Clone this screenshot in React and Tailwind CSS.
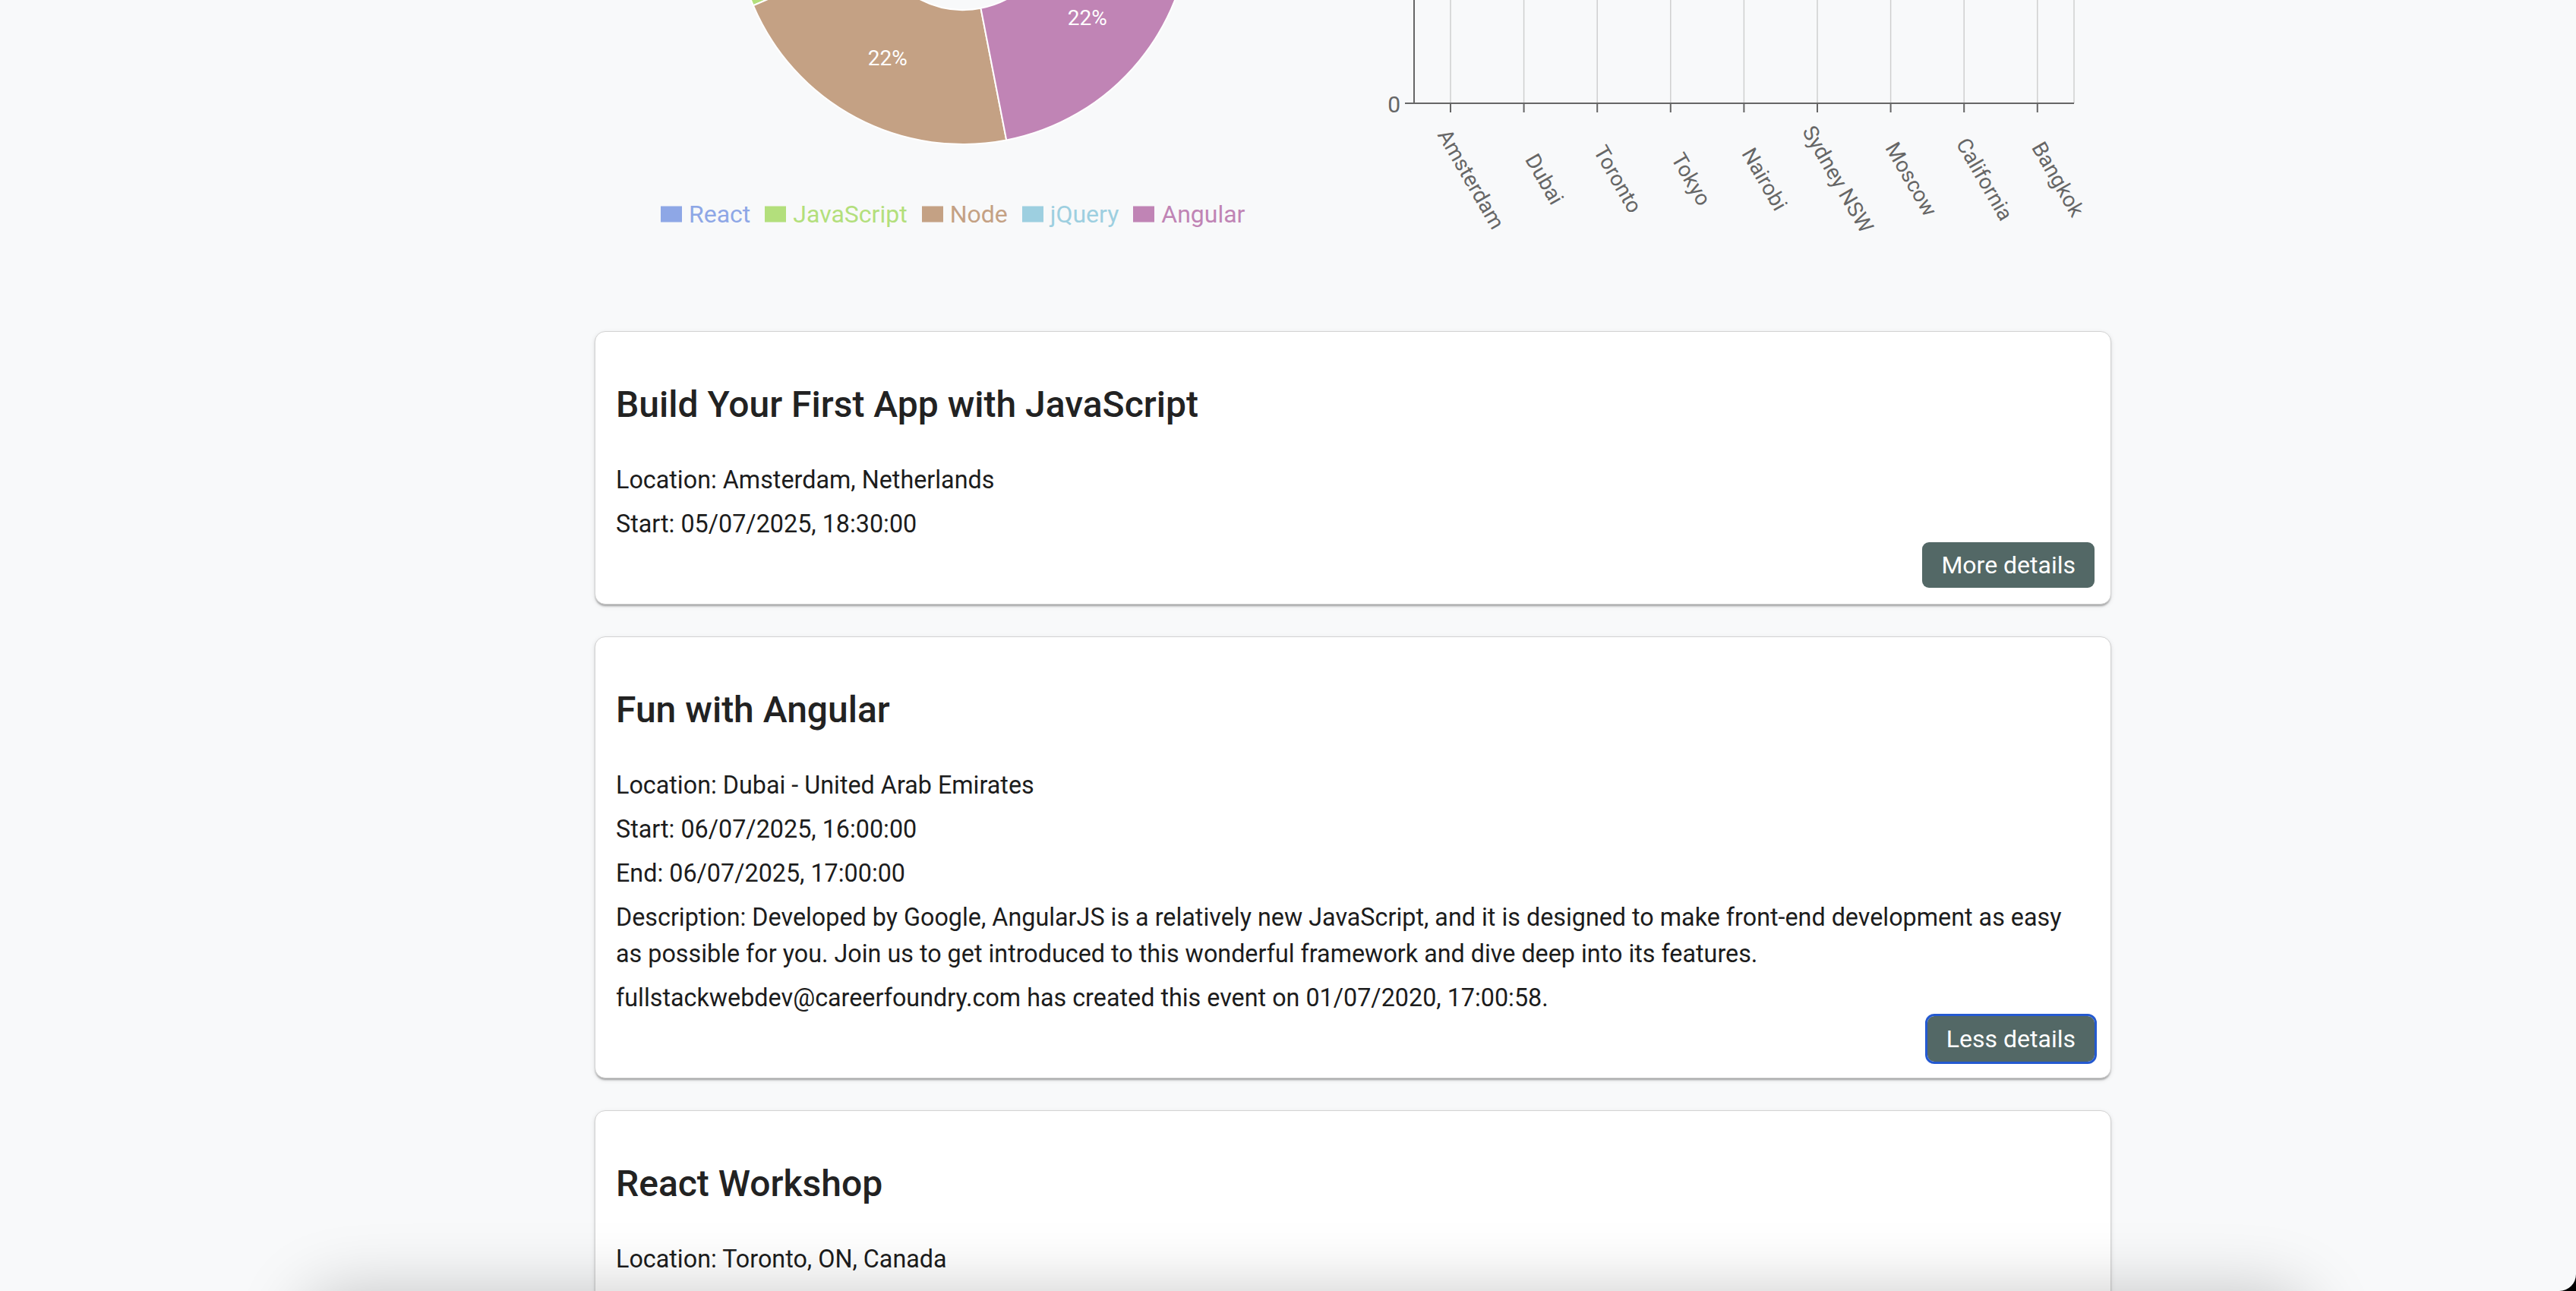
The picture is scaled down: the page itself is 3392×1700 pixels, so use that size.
import React from "react";

const FONT = { fontFamily: "Roboto, 'Noto Sans', sans-serif" };

// pie geometry (local to left chart column)
const CX = 485;
const CY = -110;
const R_OUT = 300;
const R_IN = 123;

const SLICES = [
  { name: "React", color: "#8ea7e6", a0: 236, a1: 359.6, label: "34%" },
  { name: "JavaScript", color: "#b3df7c", a0: 157, a1: 236, label: "22%" },
  { name: "Node", color: "#c4a184", a0: 79, a1: 157, label: "22%" },
  { name: "jQuery", color: "#9dcfe0", a0: 79, a1: 79, label: null },
  { name: "Angular", color: "#c084b5", a0: -0.4, a1: 79, label: "22%" },
];

const CITIES = [
  "Amsterdam",
  "Dubai",
  "Toronto",
  "Tokyo",
  "Nairobi",
  "Sydney NSW",
  "Moscow",
  "California",
  "Bangkok",
];

const EVENTS = [
  {
    title: "Build Your First App with JavaScript",
    lines: ["Location: Amsterdam, Netherlands", "Start: 05/07/2025, 18:30:00"],
    open: false,
  },
  {
    title: "Fun with Angular",
    lines: [
      "Location: Dubai - United Arab Emirates",
      "Start: 06/07/2025, 16:00:00",
      "End: 06/07/2025, 17:00:00",
      "Description: Developed by Google, AngularJS is a relatively new JavaScript, and it is designed to make front-end development as easy as possible for you. Join us to get introduced to this wonderful framework and dive deep into its features.",
      "fullstackwebdev@careerfoundry.com has created this event on 01/07/2020, 17:00:58.",
    ],
    open: true,
  },
  {
    title: "React Workshop",
    lines: ["Location: Toronto, ON, Canada", "Start: 07/07/2025, 18:00:00"],
    open: false,
  },
];

const pt = (r, a) => {
  const rad = (a * Math.PI) / 180;
  return [CX + r * Math.cos(rad), CY + r * Math.sin(rad)];
};

function arcPath(a0, a1) {
  const large = a1 - a0 > 180 ? 1 : 0;
  const [x0, y0] = pt(R_OUT, a0);
  const [x1, y1] = pt(R_OUT, a1);
  const [x2, y2] = pt(R_IN, a1);
  const [x3, y3] = pt(R_IN, a0);
  return `M${x0},${y0} A${R_OUT},${R_OUT} 0 ${large} 1 ${x1},${y1} L${x2},${y2} A${R_IN},${R_IN} 0 ${large} 0 ${x3},${y3} Z`;
}

function PieChart() {
  return (
    <div className="flex w-[998px] flex-col">
      <svg width="998" height="262" className="overflow-visible">
        {SLICES.filter((s) => s.a1 > s.a0).map((s) => (
          <path key={s.name} d={arcPath(s.a0, s.a1)} fill={s.color} stroke="#fff" strokeWidth="2" />
        ))}
        {SLICES.filter((s) => s.label).map((s) => {
          const [x, y] = pt((R_OUT + R_IN) / 2, (s.a0 + s.a1) / 2);
          return (
            <text
              key={s.name}
              x={x}
              y={y}
              fill="#fff"
              fontSize="28"
              textAnchor="middle"
              dominantBaseline="central"
              style={FONT}
            >
              {s.label}
            </text>
          );
        })}
      </svg>
      <div className="flex h-[44px] items-center gap-[19px] pl-[87px] -mt-[2px]">
        {SLICES.map((s) => (
          <div key={s.name} className="flex items-center gap-[9px]">
            <svg width="28" height="28">
              <rect x="0" y="3.5" width="28" height="21" fill={s.color} />
            </svg>
            <span className="text-[32px] leading-[44px]" style={{ color: s.color }}>
              {s.name}
            </span>
          </div>
        ))}
      </div>
    </div>
  );
}

function BarChart() {
  const ticks = CITIES.map((c, i) => ({ name: c, x: 129 + i * 96.6 }));
  return (
    <div className="w-[999px]">
      <svg width="999" height="330" className="overflow-visible" style={FONT}>
        {ticks.map((t) => (
          <line key={t.name} x1={t.x} y1="-20" x2={t.x} y2="136" stroke="#cfcfcf" strokeWidth="1.5" />
        ))}
        <line x1="950" y1="-20" x2="950" y2="136" stroke="#cfcfcf" strokeWidth="1.5" />
        <line x1="81" y1="-20" x2="81" y2="137" stroke="#666" strokeWidth="2" />
        <line x1="69" y1="136" x2="950" y2="136" stroke="#666" strokeWidth="2" />
        {ticks.map((t) => (
          <line key={t.name + "t"} x1={t.x} y1="136" x2={t.x} y2="148" stroke="#666" strokeWidth="2" />
        ))}
        <text x="63" y="137" fill="#666" fontSize="30" textAnchor="end" dominantBaseline="central">
          0
        </text>
        {ticks.map((t) => (
          <text
            key={t.name + "l"}
            x={t.x + 27}
            y="236"
            fill="#666"
            fontSize="28"
            textAnchor="middle"
            dominantBaseline="central"
            transform={`rotate(60 ${t.x + 27} 236)`}
          >
            {t.name}
          </text>
        ))}
      </svg>
    </div>
  );
}

function EventCard({ event }) {
  return (
    <div className="rounded-[14px] border border-[#d3d3d3] bg-white pb-[21px] pl-[27px] pr-[21px] pt-[28px] shadow-[0_4px_3px_-2px_rgba(0,0,0,0.2),0_2px_2px_0_rgba(0,0,0,0.12),0_2px_6px_0_rgba(0,0,0,0.1)]">
      <h2 className="mb-[47px] mt-[40px] pr-[20px] text-[48px] font-medium leading-[56px] text-[#222]">
        {event.title}
      </h2>
      {event.lines.map((line) => (
        <p key={line} className="mt-[10px] pr-[20px] text-[32.3px] leading-[48px] text-[#1c1c1c]">
          {line}
        </p>
      ))}
      <div className="flex justify-end">
        <button
          className={`h-[60px] rounded-[9px] bg-[#536866] px-[25px] text-[32px] text-white ${
            event.open ? "outline-[3px] outline-solid outline-[#2459d0]" : ""
          }`}
        >
          {event.open ? "Less details" : "More details"}
        </button>
      </div>
    </div>
  );
}

export default function App() {
  return (
    <div className="h-[1700px] w-full overflow-hidden bg-black" style={FONT}>
      <div className="relative h-full overflow-hidden rounded-br-[22px] bg-[#f8f9fa]">
        <div className="ml-[783px] flex w-[1997px] flex-col">
          <div className="flex h-[436px]">
            <PieChart />
            <BarChart />
          </div>
          <div className="flex flex-col gap-[42px]">
            {EVENTS.map((ev) => (
              <EventCard key={ev.title} event={ev} />
            ))}
          </div>
        </div>
        {/* shadow of the panel sitting just below the viewport */}
        <div className="absolute left-[410px] top-[1712px] z-10 h-[200px] w-[2620px] rounded-[40px] bg-[#f8f9fa] shadow-[0_0_90px_10px_rgba(0,0,0,0.22)]" />
      </div>
    </div>
  );
}
